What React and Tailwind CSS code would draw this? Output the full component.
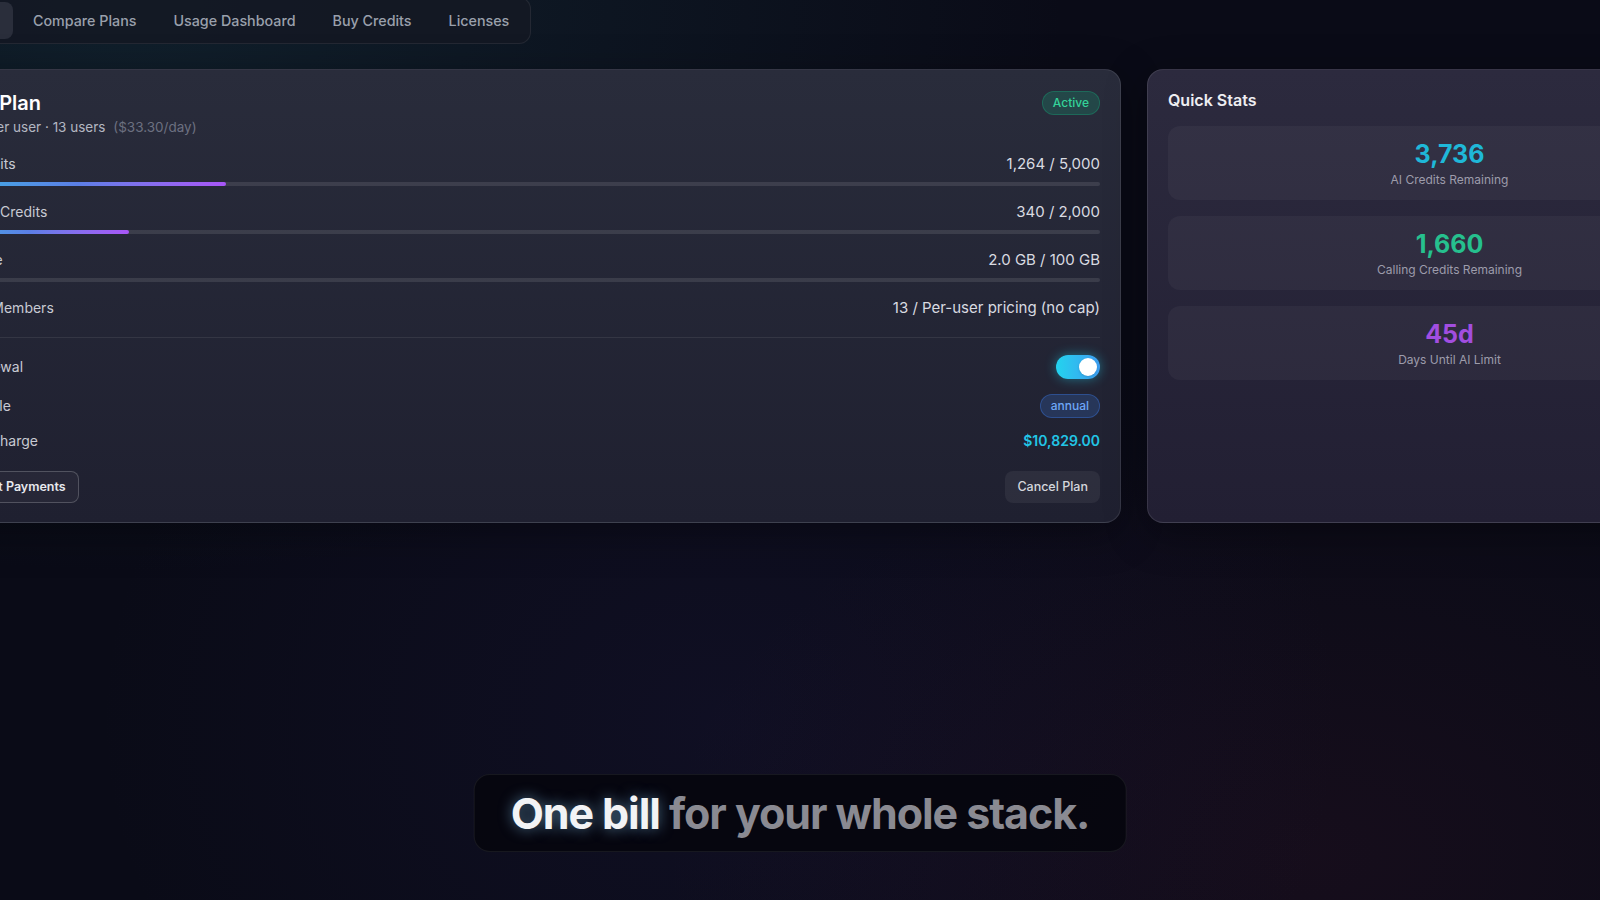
import { Sparkles, Phone, HardDrive, Users } from 'lucide-react'

const tabs = ['Overview', 'Compare Plans', 'Usage Dashboard', 'Buy Credits', 'Licenses']

const usage = [
  { icon: Sparkles, label: 'AI Credits', value: '1,264 / 5,000', pct: 25.28 },
  { icon: Phone, label: 'Calling Credits', value: '340 / 2,000', pct: 17 },
  { icon: HardDrive, label: 'Storage', value: '2.0 GB / 100 GB', pct: 2 },
  { icon: Users, label: 'Team Members', value: '13 / Per-user pricing (no cap)' },
]

const stats = [
  { value: '3,736', label: 'AI Credits Remaining', color: 'text-[#1fb8d8]' },
  { value: '1,660', label: 'Calling Credits Remaining', color: 'text-[#26c08e]' },
  { value: '45d', label: 'Days Until AI Limit', color: 'text-[#a24ee0]' },
]

export default function App() {
  return (
    <div className="relative w-[1600px] h-[900px] overflow-hidden bg-[#0a0b17] font-['Inter',sans-serif] antialiased">
      {/* background glows */}
      <div className="absolute inset-0 bg-[radial-gradient(ellipse_at_8%_0%,rgba(28,70,82,0.35),transparent_45%),radial-gradient(ellipse_at_45%_80%,rgba(50,40,110,0.14),transparent_50%),radial-gradient(ellipse_at_82%_95%,rgba(110,30,60,0.12),transparent_35%)]" />

      <div className="relative -ml-[91px] -mt-[3px] flex flex-col">
        {/* Tabs */}
        <div className="self-start flex items-center gap-[3px] p-1 rounded-xl border border-white/[0.07] bg-[#141824]/90">
          {tabs.map((t, i) => (
            <button
              key={t}
              className={`px-[17px] py-2 rounded-lg text-[14.3px] leading-[21px] font-medium ${
                i === 0 ? 'bg-[#2a2e3b] text-white' : 'text-[#9aa0ac]'
              }`}
            >
              {t}
            </button>
          ))}
        </div>

        <div className="mt-[25px] flex gap-[26px] items-stretch">
          {/* Plan card */}
          <div className="w-[1212px] shrink-0 rounded-2xl border border-white/10 bg-gradient-to-b from-[#292c3b] to-[#1f2030] px-5 pt-[21px] pb-[19px] shadow-[0_10px_40px_rgba(0,0,0,0.35)]">
            <div className="flex items-start justify-between">
              <div>
                <h2 className="text-[20px] leading-6 font-semibold text-white">Teams Plan</h2>
                <p className="mt-0.5 text-[13.5px] leading-5 text-[#b4b7c2]">
                  $833/yr. per user · 13 users <span className="ml-1 text-[#6c7080]">($33.30/day)</span>
                </p>
              </div>
              <span className="h-6 px-[10px] flex items-center rounded-full border border-[#10b981]/30 bg-[#10b981]/20 text-[12px] font-medium text-[#34d399]">
                Active
              </span>
            </div>

            <div className="mt-[17px] flex flex-col gap-4 pb-[19px] border-b border-white/[0.08]">
              {usage.map((u) => (
                <div key={u.label}>
                  <div className="flex items-center justify-between leading-5">
                    <span className="flex items-center gap-[7px] text-[14px] text-[#c8cad3]">
                      <u.icon size={14} className="text-[#8b8fa0]" />
                      {u.label}
                    </span>
                    <span className="text-[15px] text-[#d9dbe1]">{u.value}</span>
                  </div>
                  {u.pct !== undefined && (
                    <div className="mt-2 h-1 rounded-full bg-white/10 overflow-hidden">
                      <div
                        className="h-full rounded-full bg-gradient-to-r from-[#22b8e0] via-[#5b7fe6] to-[#a855f7]"
                        style={{ width: `${u.pct}%` }}
                      />
                    </div>
                  )}
                </div>
              ))}
            </div>

            <div className="pt-[17px] flex flex-col text-[14px] leading-5">
              <div className="flex items-center justify-between h-6">
                <span className="text-[#c8cad3]">Auto-Renewal</span>
                <div className="relative w-11 h-6 rounded-full bg-gradient-to-r from-[#22d3ee] to-[#3b9cf0] shadow-[0_0_12px_rgba(34,211,238,0.45)]">
                  <div className="absolute right-[3px] top-[3px] w-[18px] h-[18px] rounded-full bg-white shadow" />
                </div>
              </div>
              <div className="mt-[15px] flex items-center justify-between h-6">
                <span className="text-[#c8cad3]">Billing Cycle</span>
                <span className="h-6 px-2.5 flex items-center rounded-full border border-[#3b82f6]/35 bg-[#3b82f6]/20 text-[12px] font-medium text-[#6ea6f6]">
                  annual
                </span>
              </div>
              <div className="mt-[13px] flex items-center justify-between">
                <span className="text-[#c8cad3]">Renewal Charge</span>
                <span className="text-[14px] font-semibold text-[#22c5e6]">$10,829.00</span>
              </div>
            </div>

            <div className="mt-[20px] flex items-center justify-between">
              <button className="h-8 pl-[14px] pr-3 rounded-lg border border-white/20 bg-white/[0.03] text-[12.5px] font-semibold text-[#e8e9ee]">
                Merchant Payments
              </button>
              <button className="h-8 px-3 rounded-lg bg-white/[0.06] text-[12.5px] font-medium text-[#d4d6dc]">
                Cancel Plan
              </button>
            </div>
          </div>

          {/* Quick stats */}
          <div className="w-[605px] shrink-0 rounded-2xl border border-white/10 bg-gradient-to-b from-[#2c2a3e] to-[#221f33] px-5 pt-[18px] pb-5 shadow-[0_10px_40px_rgba(0,0,0,0.35)]">
            <h3 className="text-[16px] leading-6 font-semibold text-[#eeeef2]">Quick Stats</h3>
            <div className="mt-[14px] flex flex-col gap-4">
              {stats.map((s) => (
                <div key={s.label} className="rounded-xl bg-white/[0.04] pt-3 pb-[10px] flex flex-col items-center">
                  <span className={`text-[25px] leading-8 font-bold ${s.color}`}>{s.value}</span>
                  <span className="text-[12px] leading-5 text-[#9d9cab]">{s.label}</span>
                </div>
              ))}
            </div>
          </div>
        </div>
      </div>

      {/* Caption */}
      <div className="absolute left-1/2 -translate-x-1/2 bottom-12 rounded-2xl border border-white/[0.07] bg-[#05060d]/90 px-9 py-[14px]">
        <p className="whitespace-nowrap text-[43px] leading-[48px] font-bold tracking-tight">
          <span className="text-[#f2f3f5] [text-shadow:0_0_14px_rgba(140,210,255,0.55)]">One bill</span>{' '}
          <span className="text-[#8a8a92]">for your whole stack.</span>
        </p>
      </div>
    </div>
  )
}
